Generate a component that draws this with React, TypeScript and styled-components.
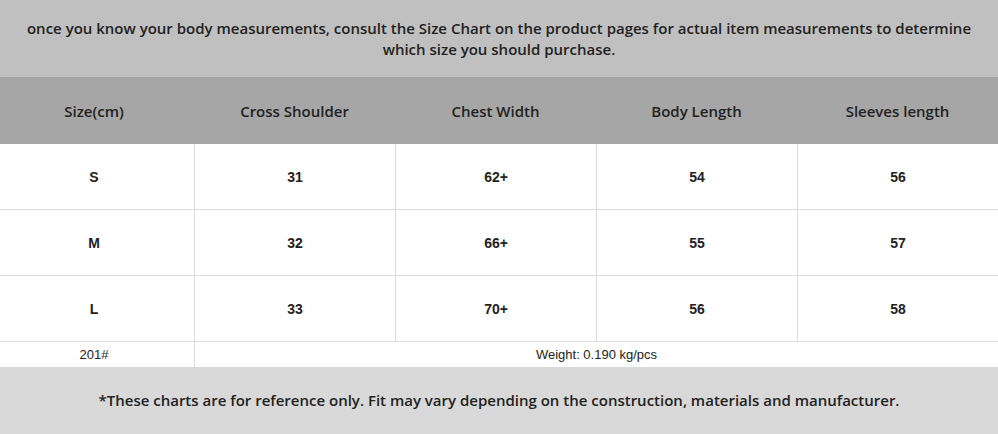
import React from "react";
import styled, { createGlobalStyle } from "styled-components";

const Global = createGlobalStyle`
  html, body { margin: 0; padding: 0; background: #ffffff; }
  body { font-family: "Open Sans", "Liberation Sans", sans-serif; color: #222; }
`;

const Page = styled.div`
  width: 998px;
  display: flex;
  flex-direction: column;
`;

const Band = styled.div<{ $bg: string; $h: number }>`
  height: ${(p) => p.$h}px;
  background: ${(p) => p.$bg};
  display: flex;
  align-items: center;
  justify-content: center;
  text-align: center;
  font-family: "Open Sans", "Liberation Sans", sans-serif;
  font-weight: 600;
  font-size: 15px;
  line-height: 21px;
  color: #222;
  padding: 0 10px;
  box-sizing: border-box;
`;

const Grid = styled.div`
  display: grid;
  grid-template-columns: 194px repeat(3, 201px) 201px;
`;

const HeadCell = styled.div<{ $first?: boolean }>`
  height: 67px;
  background: #a6a6a6;
  display: flex;
  align-items: center;
  justify-content: center;
  padding-right: ${(p) => (p.$first ? "6px" : "0")};
  font-family: "Open Sans", "Liberation Sans", sans-serif;
  font-weight: 600;
  font-size: 15px;
  color: #222;
`;

const Cell = styled.div<{ $first?: boolean; $h?: number; $span?: number; $small?: boolean; $noTop?: boolean }>`
  height: ${(p) => p.$h ?? 66}px;
  box-sizing: border-box;
  border-left: ${(p) => (p.$first ? "none" : "1px solid #dcdcdc")};
  border-top: ${(p) => (p.$noTop ? "none" : "1px solid #dcdcdc")};
  ${(p) => (p.$span ? `grid-column: span ${p.$span};` : "")}
  padding-right: ${(p) => (p.$first ? "6px" : "0")};
  display: flex;
  align-items: center;
  justify-content: center;
  font-family: "Liberation Sans", Arial, sans-serif;
  font-weight: ${(p) => (p.$small ? 400 : 700)};
  font-size: ${(p) => (p.$small ? "13px" : "14px")};
  color: #222;
  background: #fff;
`;

const headers = ["Size(cm)", "Cross Shoulder", "Chest Width", "Body Length", "Sleeves length"];
const rows = [
  ["S", "31", "62+", "54", "56"],
  ["M", "32", "66+", "55", "57"],
  ["L", "33", "70+", "56", "58"],
];

export default function App() {
  return (
    <Page>
      <Global />
      <Band $bg="#c0c0c0" $h={77}>
        once you know your body measurements, consult the Size Chart on the product pages for actual item measurements to determine
        <br />
        which size you should purchase.
      </Band>
      <Grid>
        {headers.map((h, i) => (
          <HeadCell key={h} $first={i === 0}>
            {h}
          </HeadCell>
        ))}
        {rows.map((r, ri) =>
          r.map((v, ci) => (
            <Cell key={`${ri}-${ci}`} $first={ci === 0} $noTop={ri === 0} $h={ri === 0 ? 65 : 66}>
              {v}
            </Cell>
          ))
        )}
        <Cell $first $h={26} $small>
          201#
        </Cell>
        <Cell $h={26} $span={4} $small>
          Weight: 0.190 kg/pcs
        </Cell>
      </Grid>
      <Band $bg="#d9d9d9" $h={67}>
        *These charts are for reference only. Fit may vary depending on the construction, materials and manufacturer.
      </Band>
    </Page>
  );
}
